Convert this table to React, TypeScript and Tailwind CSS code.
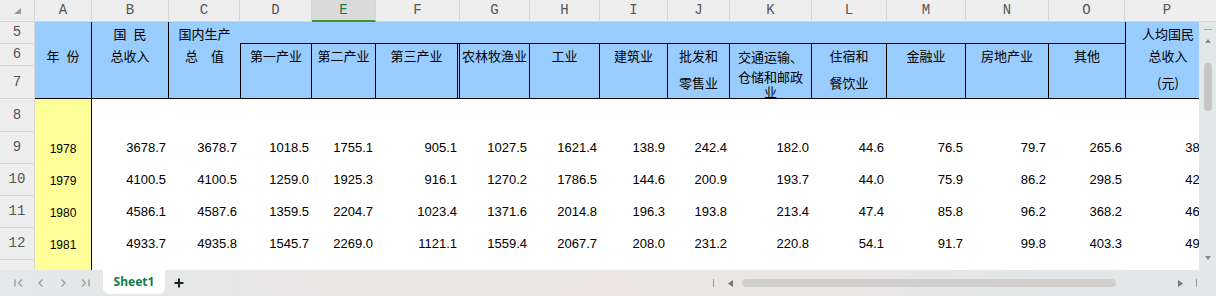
import React from "react";

const CJK = "font-['Noto_Sans_CJK_SC',sans-serif]";
const NUM = "font-['Liberation_Sans',Arial,sans-serif]";
const MONO = "font-['Liberation_Mono',monospace]";

// widths for columns A..P
const COL_W = [
  "w-[57px]", "w-[77px]", "w-[71px]", "w-[72px]", "w-[64px]", "w-[84px]",
  "w-[70px]", "w-[70px]", "w-[68px]", "w-[62px]", "w-[82px]", "w-[75px]",
  "w-[79px]", "w-[83px]", "w-[76px]", "w-[85px]",
];
const LETTERS = "ABCDEFGHIJKLMNOP".split("");

const ROWS: { year: string; vals: string[] }[] = [
  { year: "1978", vals: ["3678.7", "3678.7", "1018.5", "1755.1", "905.1", "1027.5", "1621.4", "138.9", "242.4", "182.0", "44.6", "76.5", "79.7", "265.6", "385"] },
  { year: "1979", vals: ["4100.5", "4100.5", "1259.0", "1925.3", "916.1", "1270.2", "1786.5", "144.6", "200.9", "193.7", "44.0", "75.9", "86.2", "298.5", "423"] },
  { year: "1980", vals: ["4586.1", "4587.6", "1359.5", "2204.7", "1023.4", "1371.6", "2014.8", "196.3", "193.8", "213.4", "47.4", "85.8", "96.2", "368.2", "468"] },
  { year: "1981", vals: ["4933.7", "4935.8", "1545.7", "2269.0", "1121.1", "1559.4", "2067.7", "208.0", "231.2", "220.8", "54.1", "91.7", "99.8", "403.3", "497"] },
];

// header cells D..O, spanning sheet rows 6-7
const SUB_HEADS: { cls: string; lines: string[] }[] = [
  { cls: "col-start-5 border-l border-r", lines: ["第一产业"] },
  { cls: "col-start-6 border-r", lines: ["第二产业"] },
  { cls: "col-start-7 border-r-[3px] border-double", lines: ["第三产业"] },
  { cls: "col-start-8 border-r", lines: ["农林牧渔业"] },
  { cls: "col-start-9 border-r", lines: ["工业"] },
  { cls: "col-start-10 border-r", lines: ["建筑业"] },
  { cls: "col-start-11 border-r", lines: ["批发和", "零售业"] },
  { cls: "col-start-13 border-r", lines: ["住宿和", "餐饮业"] },
  { cls: "col-start-14 border-r", lines: ["金融业"] },
  { cls: "col-start-15 border-r", lines: ["房地产业"] },
  { cls: "col-start-16", lines: ["其他"] },
];

function Line({ h, children }: { h: string; children?: React.ReactNode }) {
  return <div className={`${h} flex items-center justify-center leading-none whitespace-nowrap`}>{children}</div>;
}

// two characters with the wide gap used in the sheet
function Spaced({ a, b }: { a: string; b: string }) {
  return (
    <span className="flex gap-[7px]">
      <span>{a}</span>
      <span>{b}</span>
    </span>
  );
}

function ColumnHeader() {
  return (
    <div className={`flex h-[22px] bg-[#eeeeee] ${MONO} text-[14px] text-[#555]`}>
      <div className="w-[35px] shrink-0 border-r border-b border-[#d6d6d6] flex items-end justify-end pr-[13px] pb-[7px]">
        <svg width="7" height="6" viewBox="0 0 7 6">
          <polygon points="7,0 7,6 0,6" fill="#9a9a9a" />
        </svg>
      </div>
      {LETTERS.map((l, i) =>
        l === "E" ? (
          <div key={l} className={`${COL_W[i]} shrink-0 border-r border-[#d6d6d6] bg-[#dadada] border-b-2 border-b-[#4a9230] text-[#1f7a3f] flex items-center justify-center pt-[1px]`}>
            {l}
          </div>
        ) : (
          <div key={l} className={`${COL_W[i]} shrink-0 border-r border-b border-[#d6d6d6] flex items-center justify-center`}>
            {l}
          </div>
        )
      )}
    </div>
  );
}

function RowNum({ n, cls }: { n: string; cls: string }) {
  return (
    <div className={`${cls} bg-[#eeeeee] border-r border-b border-[#d6d6d6] flex items-center justify-center ${MONO} text-[14px] text-[#555]`}>
      {n}
    </div>
  );
}

function HeaderBlock() {
  return (
    <div className={`grid grid-cols-[35px_57px_77px_71px_72px_64px_84px_70px_70px_68px_62px_82px_75px_79px_83px_76px_85px] grid-rows-[22px_22px_33px] ${CJK} text-[13px] text-black`}>
      <RowNum n="5" cls="col-start-1 row-start-1" />
      <RowNum n="6" cls="col-start-1 row-start-2" />
      <RowNum n="7" cls="col-start-1 row-start-3" />

      <div className="col-start-2 row-start-1 row-span-3 bg-[#99ccff] border-r border-b border-black">
        <Line h="h-[22px]" />
        <Line h="h-[22px]">
          <Spaced a="年" b="份" />
        </Line>
      </div>
      <div className="col-start-3 row-start-1 row-span-3 bg-[#99ccff] border-r border-b border-black">
        <Line h="h-[22px]">
          <Spaced a="国" b="民" />
        </Line>
        <Line h="h-[22px]">总收入</Line>
      </div>
      <div className="col-start-4 row-start-1 row-span-3 bg-[#99ccff] border-b border-black">
        <Line h="h-[22px]">国内生产</Line>
        <Line h="h-[22px]">总　值</Line>
      </div>
      <div className="col-start-5 col-span-12 row-start-1 bg-[#99ccff] border-b border-black" />

      {SUB_HEADS.map((c) => (
        <div key={c.lines[0]} className={`${c.cls} row-start-2 row-span-2 bg-[#99ccff] border-b border-black`}>
          <Line h="h-[22px]">{c.lines[0]}</Line>
          {c.lines[1] && <Line h="h-[32px]">{c.lines[1]}</Line>}
        </div>
      ))}
      <div className="col-start-12 row-start-2 row-span-2 bg-[#99ccff] border-r border-b border-black overflow-hidden">
        <Line h="h-[24px]">交通运输、</Line>
        <Line h="h-[17px]">仓储和邮政</Line>
        <Line h="h-[13px]">业</Line>
      </div>

      <div className="col-start-17 row-start-1 row-span-3 bg-[#99ccff] border-l border-b border-black">
        <Line h="h-[22px]">人均国民</Line>
        <Line h="h-[22px]">总收入</Line>
        <Line h="h-[32px]">(元)</Line>
      </div>
    </div>
  );
}

function DataRow({ n, h, year, vals }: { n: string; h: string; year?: string; vals?: string[] }) {
  return (
    <div className={`flex ${h} shrink-0`}>
      <div className={`w-[35px] shrink-0 bg-[#eeeeee] border-r border-b border-[#d6d6d6] flex items-center justify-center ${MONO} text-[14px] text-[#555]`}>
        {n}
      </div>
      <div className={`${COL_W[0]} shrink-0 bg-[#ffff99] border-r border-black flex items-center justify-center pt-[2px] ${NUM} text-[12px] text-black`}>
        {year}
      </div>
      {COL_W.slice(1).map((w, i) => (
        <div key={i} className={`${w} shrink-0 flex items-center justify-end pr-[3px] pb-[1px] ${NUM} text-[13px] text-black`}>
          {vals ? vals[i] : ""}
        </div>
      ))}
    </div>
  );
}

function VScroll() {
  return (
    <div className="w-[17px] shrink-0 flex flex-col">
      <div className="h-[22px] shrink-0 bg-[#eeeeee] border-b border-[#d6d6d6]" />
      <div className="flex-1 bg-[#e2e8e8] flex flex-col items-center">
        <div className="mt-[7px] w-[8px] h-[1px] bg-[#a8a8a8]" />
        <svg className="mt-[9px]" width="6" height="4" viewBox="0 0 6 4">
          <polygon points="3,0 6,4 0,4" fill="#8a8a8a" />
        </svg>
        <div className="mt-[20px] w-[8px] h-[48px] rounded-full bg-[#c6c6c6]" />
        <svg className="mt-auto mb-[10px]" width="6" height="4" viewBox="0 0 6 4">
          <polygon points="0,0 6,0 3,4" fill="#8a8a8a" />
        </svg>
      </div>
    </div>
  );
}

function Nav({ d }: { d: string }) {
  return (
    <svg width="12" height="12" viewBox="0 0 12 12" fill="none" stroke="#a3a3a3" strokeWidth="1.5">
      <path d={d} />
    </svg>
  );
}

function BottomBar() {
  return (
    <div className="h-[26px] shrink-0 flex bg-linear-to-r from-[#e3e8e8] via-[#efe5e5] to-[#e0e8e8]">
      <div className="flex items-center gap-[10px] pl-[13px] w-[103px] shrink-0">
        <Nav d="M2 2.5v7M9 2.5L5.5 6L9 9.5" />
        <Nav d="M7.5 2.5L4 6l3.5 3.5" />
        <Nav d="M4.5 2.5L8 6l-3.5 3.5" />
        <Nav d="M3 2.5L6.5 6L3 9.5M10 2.5v7" />
      </div>
      <div className="w-[62px] h-[24px] shrink-0 bg-white rounded-b-[6px] flex items-center justify-center font-['Noto_Sans',sans-serif] font-bold text-[12px] text-[#137a4e]">
        Sheet1
      </div>
      <div className="flex items-center ml-[9px]">
        <svg width="10" height="10" viewBox="0 0 10 10" stroke="#222" strokeWidth="2">
          <path d="M5 0.5v9M0.5 5h9" />
        </svg>
      </div>
      <div className="flex-1" />
      <div className="w-[504px] shrink-0 flex items-center">
        <div className="ml-[1px] w-[1px] h-[8px] bg-[#9a9a9a]" />
        <svg className="ml-[14px]" width="5" height="7" viewBox="0 0 5 7">
          <polygon points="5,0 5,7 0,3.5" fill="#777" />
        </svg>
        <div className="ml-[9px] w-[374px] h-[8px] rounded-full bg-[#d2d0cf]" />
        <svg className="ml-[62px]" width="5" height="7" viewBox="0 0 5 7">
          <polygon points="0,0 5,3.5 0,7" fill="#777" />
        </svg>
        <div className="ml-[13px] w-[1px] h-[8px] bg-[#9a9a9a]" />
      </div>
    </div>
  );
}

export default function App() {
  return (
    <div className="w-[1216px] h-[296px] overflow-hidden bg-white flex flex-col">
      <div className="flex h-[270px] shrink-0">
        <div className="w-[1199px] shrink-0 overflow-hidden">
          <div className="w-[1210px] flex flex-col">
            <ColumnHeader />
            <HeaderBlock />
            <DataRow n="8" h="h-[33px]" />
            {ROWS.map((r, i) => (
              <DataRow key={r.year} n={String(9 + i)} h="h-[32px]" year={r.year} vals={r.vals} />
            ))}
            <DataRow n="" h="h-[32px]" />
          </div>
        </div>
        <VScroll />
      </div>
      <BottomBar />
    </div>
  );
}
